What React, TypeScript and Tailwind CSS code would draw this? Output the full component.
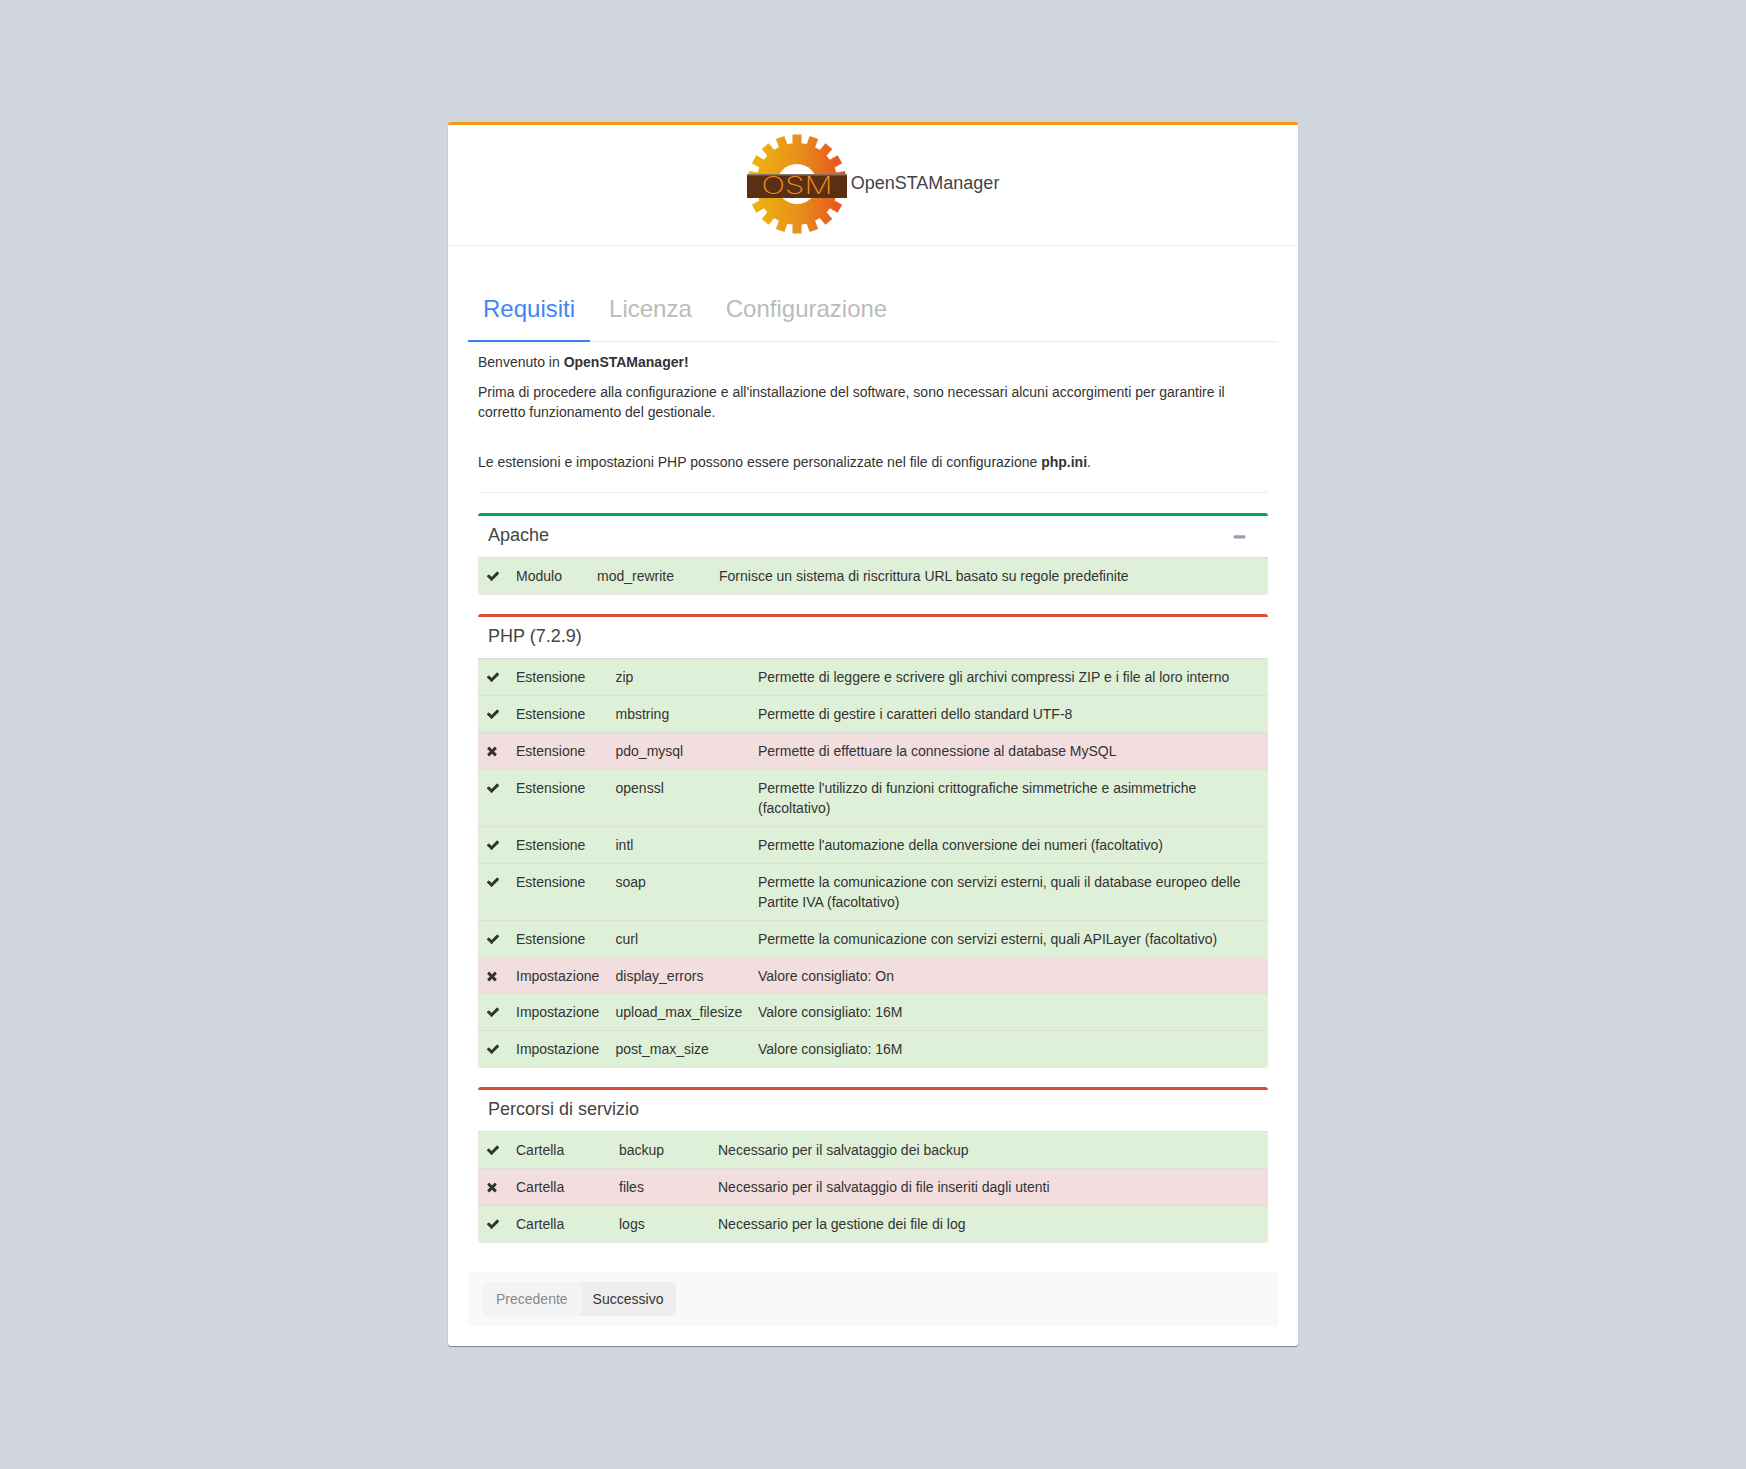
type Row = { ok: boolean; type: string; name: string; desc: string; noBorder?: boolean };

const APACHE: Row[] = [
  { ok: true, type: 'Modulo', name: 'mod_rewrite', desc: 'Fornisce un sistema di riscrittura URL basato su regole predefinite' },
];

const PHP: Row[] = [
  { ok: true, type: 'Estensione', name: 'zip', desc: 'Permette di leggere e scrivere gli archivi compressi ZIP e i file al loro interno' },
  { ok: true, type: 'Estensione', name: 'mbstring', desc: 'Permette di gestire i caratteri dello standard UTF-8' },
  { ok: false, type: 'Estensione', name: 'pdo_mysql', desc: 'Permette di effettuare la connessione al database MySQL' },
  { ok: true, type: 'Estensione', name: 'openssl', desc: "Permette l'utilizzo di funzioni crittografiche simmetriche e asimmetriche (facoltativo)" },
  { ok: true, type: 'Estensione', name: 'intl', desc: "Permette l'automazione della conversione dei numeri (facoltativo)" },
  { ok: true, type: 'Estensione', name: 'soap', desc: 'Permette la comunicazione con servizi esterni, quali il database europeo delle Partite IVA (facoltativo)' },
  { ok: true, type: 'Estensione', name: 'curl', desc: 'Permette la comunicazione con servizi esterni, quali APILayer (facoltativo)' },
  { ok: false, type: 'Impostazione', name: 'display_errors', desc: 'Valore consigliato: On', noBorder: true },
  { ok: true, type: 'Impostazione', name: 'upload_max_filesize', desc: 'Valore consigliato: 16M' },
  { ok: true, type: 'Impostazione', name: 'post_max_size', desc: 'Valore consigliato: 16M' },
];

const PATHS: Row[] = [
  { ok: true, type: 'Cartella', name: 'backup', desc: 'Necessario per il salvataggio dei backup' },
  { ok: false, type: 'Cartella', name: 'files', desc: 'Necessario per il salvataggio di file inseriti dagli utenti' },
  { ok: true, type: 'Cartella', name: 'logs', desc: 'Necessario per la gestione dei file di log' },
];

function CheckIcon() {
  return (
    <svg width="14" height="14" viewBox="0 0 1792 1792" fill="currentColor">
      <path d="M1671 566q0 40-28 68l-724 724-136 136q-28 28-68 28t-68-28l-136-136-362-362q-28-28-28-68t28-68l136-136q28-28 68-28t68 28l294 295 656-657q28-28 68-28t68 28l136 136q28 28 28 68z" />
    </svg>
  );
}

function TimesIcon() {
  return (
    <svg width="14" height="14" viewBox="0 0 1792 1792" fill="currentColor" className="-ml-[1px]">
      <path d="M1490 1322q0 40-28 68l-136 136q-28 28-68 28t-68-28l-294-294-294 294q-28 28-68 28t-68-28l-136-136q-28-28-28-68t28-68l294-294-294-294q-28-28-28-68t28-68l136-136q28-28 68-28t68 28l294 294 294-294q28-28 68-28t68 28l136 136q28 28 28 68t-28 68l-294 294 294 294q28 28 28 68z" />
    </svg>
  );
}

function MinusIcon() {
  return (
    <svg width="15" height="15" viewBox="0 0 1792 1792" fill="currentColor" className="mr-[11px] mt-[5px] text-[#97a0b3]">
      <path d="M1600 736v192q0 40-28 68t-68 28h-1216q-40 0-68-28t-28-68v-192q0-40 28-68t68-28h1216q40 0 68 28t28 68z" />
    </svg>
  );
}

function Logo() {
  const teeth = Array.from({ length: 18 }, (_, i) => i * 20);
  return (
    <svg width="100" height="100" viewBox="0 0 100 100" className="-mt-[2px] shrink-0">
      <defs>
        <linearGradient id="gear" x1="0" x2="1" y1="0" y2="0">
          <stop offset="0" stopColor="#ecb90e" />
          <stop offset="0.5" stopColor="#e8911a" />
          <stop offset="1" stopColor="#e5501f" />
        </linearGradient>
        <mask id="gearMask">
          <circle cx="50" cy="50" r="41" fill="white" />
          {teeth.map((a) => (
            <rect key={a} x="45.5" y="0.5" width="9" height="12" fill="white" transform={`rotate(${a} 50 50)`} />
          ))}
          <circle cx="50" cy="50" r="20" fill="black" />
        </mask>
      </defs>
      <rect x="0" y="0" width="100" height="100" fill="url(#gear)" mask="url(#gearMask)" />
      <rect x="0" y="40" width="100" height="24" fill="#5b2f12" />
      <rect x="0" y="40" width="100" height="1.5" fill="#8a7565" />
      <text
        x="50"
        y="60"
        textAnchor="middle"
        fontFamily="Inter, 'Liberation Sans', sans-serif"
        fontWeight="200"
        fontSize="24"
        textLength="71"
        lengthAdjust="spacingAndGlyphs"
        fill="#f08a1c"
      >
        OSM
      </text>
    </svg>
  );
}

function RequirementsBox({ title, color, rows, widths, collapse }: { title: string; color: string; rows: Row[]; widths: number[]; collapse?: boolean }) {
  return (
    <div className={`mb-5 overflow-hidden rounded-[3px] border-t-[3px] bg-white shadow-[0_1px_1px_rgba(0,0,0,0.1)] ${color}`}>
      <div className="flex h-[41px] items-center justify-between px-[10px] pb-[4px]">
        <h3 className="text-[18px] leading-[20px] text-[#444]">{title}</h3>
        {collapse && <MinusIcon />}
      </div>
      <table className="w-full table-fixed border-collapse text-[14px] leading-[20px] text-[#333]">
        <colgroup>
          {widths.map((w, i) => (
            <col key={i} style={{ width: w }} />
          ))}
          <col />
        </colgroup>
        <tbody>
          {rows.map((r) => {
            const cell = r.noBorder ? 'px-2 pt-[9px] pb-[7px] align-top' : 'border-t border-[#ddd] p-2 align-top';
            return (
              <tr key={r.name} className={r.ok ? 'bg-[#dff0d8]' : 'bg-[#f2dede]'}>
                <td className={cell}>
                  <span className="flex h-5 items-center">{r.ok ? <CheckIcon /> : <TimesIcon />}</span>
                </td>
                <td className={`${cell} whitespace-nowrap`}>{r.type}</td>
                <td className={`${cell} whitespace-nowrap`}>{r.name}</td>
                <td className={cell}>{r.desc}</td>
              </tr>
            );
          })}
        </tbody>
      </table>
    </div>
  );
}

export default function App() {
  return (
    <div className="min-h-[1469px] bg-[#d2d6de] pt-[122px] font-['Liberation_Sans',Arial,sans-serif] text-[14px] leading-[20px] text-[#333]">
      <div className="mx-auto w-[850px] rounded-[3px] border-t-[3px] border-[#f39c12] bg-white shadow-[0_1px_1px_rgba(0,0,0,0.4)]">
        <div className="flex h-[121px] items-center justify-center gap-[4px] border-b border-[#eee]">
          <Logo />
          <span className="text-[18px] leading-[20px] text-[#444] -mt-[4px]">OpenSTAManager</span>
        </div>

        <div className="px-5 pb-5 pt-[20px]">
          <ul className="flex h-[76px] items-end border-b border-[#e7eaec] text-[24px] leading-[34px] text-[#bbb]">
            <li className="-mb-px border-b-2 border-[#3c80f6] px-[15px] pb-[14px] pt-[10px] text-[#4285f4]">Requisiti</li>
            <li className="pl-[19px] pr-[17px] pb-[15px] pt-[10px]">Licenza</li>
            <li className="px-[17px] pb-[15px] pt-[10px]">Configurazione</li>
          </ul>

          <div className="px-[10px] pt-[10px]">
            <p className="mb-[10px]">
              Benvenuto in <b>OpenSTAManager!</b>
            </p>
            <p className="mb-[10px]">
              Prima di procedere alla configurazione e all'installazione del software, sono necessari alcuni accorgimenti per garantire il corretto funzionamento del gestionale.
            </p>
            <p className="mb-[20px] pt-[20px]">
              Le estensioni e impostazioni PHP possono essere personalizzate nel file di configurazione <b>php.ini</b>.
            </p>
            <hr className="mb-5 border-[#eee]" />

            <RequirementsBox title="Apache" color="border-[#00a65a]" rows={APACHE} widths={[30, 81, 122]} collapse />
            <RequirementsBox title="PHP (7.2.9)" color="border-[#dd4b39]" rows={PHP} widths={[30, 99.5, 142.5]} />
            <RequirementsBox title="Percorsi di servizio" color="border-[#dd4b39]" rows={PATHS} widths={[30, 103, 99]} />
          </div>

          <div className="mt-[30px] flex h-[54px] items-center bg-[#f9f9f9] px-[15px]">
            <div className="flex overflow-hidden rounded-[4px]">
              <span className="bg-[#f4f4f4] px-[13px] py-[7px] text-[#888]">Precedente</span>
              <span className="bg-[#eee] pl-[12px] pr-[13px] py-[7px] text-[#333]">Successivo</span>
            </div>
          </div>
        </div>
      </div>
    </div>
  );
}
